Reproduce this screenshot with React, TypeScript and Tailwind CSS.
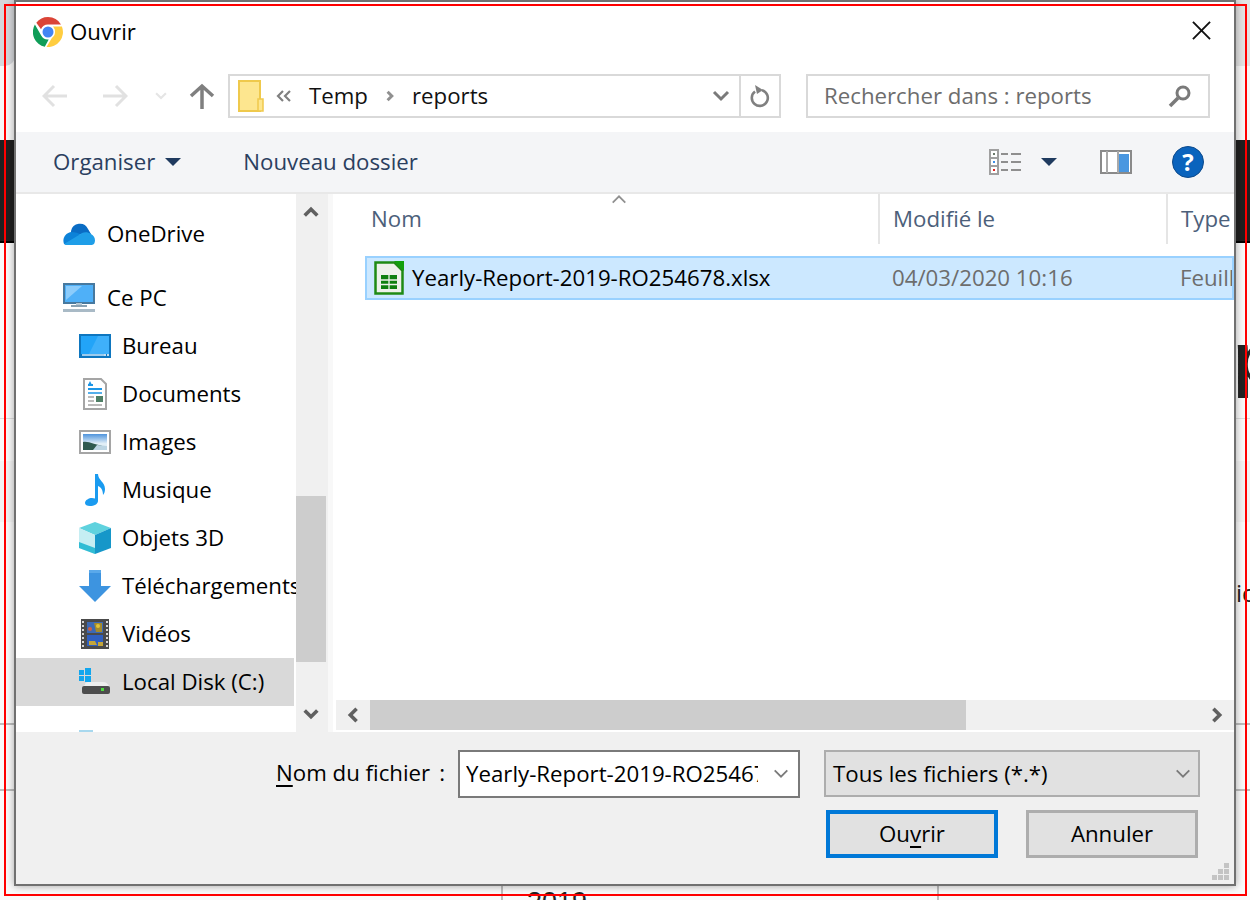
import React from "react";

const ChromeLogo = () => (
  <svg width="30" height="30" viewBox="0 0 30 30">
    <path d="M15 0a15 15 0 0 1 13 7.500H15a7.500 7.500 0 0 0-7 4.800L3.300 5.700A15 15 0 0 1 15 0z" fill="#db4437" />
    <path d="M1.900 7.600l6.300 10.900a7.500 7.500 0 0 0 7.500 4l-3.900 7.300A15 15 0 0 1 1.900 7.600z" fill="#0f9d58" />
    <path d="M28.900 9.500A15 15 0 0 1 13.500 30l6.200-10.500A7.500 7.500 0 0 0 20 9.500z" fill="#ffcd40" />
    <circle cx="15" cy="15" r="7" fill="#fff" />
    <circle cx="15" cy="15" r="5.500" fill="#4285f4" />
  </svg>
);

const Chevron = ({
  dir,
  color,
  size = 20,
  weight = 3,
}: {
  dir: "up" | "down" | "left" | "right";
  color: string;
  size?: number;
  weight?: number;
}) => {
  const points = {
    up: "3,14 10,7 17,14",
    down: "3,6 10,13 17,6",
    left: "14,3 7,10 14,17",
    right: "6,3 13,10 6,17",
  }[dir];
  return (
    <svg width={size} height={size} viewBox="0 0 20 20" className="shrink-0">
      <polyline points={points} fill="none" stroke={color} strokeWidth={weight} />
    </svg>
  );
};

const Triangle = () => (
  <svg width="16" height="8" viewBox="0 0 16 8" className="shrink-0">
    <path d="M0 0h16L8 8z" fill="#1f3a5f" />
  </svg>
);

const Arrow = ({ color, flip }: { color: string; flip?: boolean }) => (
  <svg width="26" height="24" viewBox="0 0 26 24" className={flip ? "rotate-180" : ""}>
    <path d="M25 12H3M12 2L2 12l10 10" fill="none" stroke={color} strokeWidth="3" />
  </svg>
);

const FolderIcon = () => (
  <svg width="26" height="32" viewBox="0 0 26 32" className="shrink-0">
    <rect x="1" y="1" width="21" height="30" fill="#fde68f" stroke="#efc94c" strokeWidth="2" />
    <rect x="20" y="19" width="5" height="12" fill="#fde68f" stroke="#efc94c" strokeWidth="1.500" />
  </svg>
);

const DoubleChevron = () => (
  <svg width="16" height="14" viewBox="0 0 16 14" className="shrink-0">
    <path d="M7 2L2 7l5 5M14 2L9 7l5 5" fill="none" stroke="#808080" strokeWidth="2.200" />
  </svg>
);

const SheetIcon = () => (
  <svg width="30" height="34" viewBox="0 0 30 34">
    <path d="M1.500 1.500h19l8 8v23h-27z" fill="#eef1ea" stroke="#1f8a14" strokeWidth="2.500" />
    <path d="M20 0h10v10z" fill="#11a00c" />
    <rect x="7" y="14" width="16" height="14" fill="#0f7f0f" />
    <path d="M7 19h16M7 23.500h16M15 14v14" stroke="#eef1ea" strokeWidth="1.300" />
  </svg>
);

const OneDriveIcon = () => (
  <svg width="32" height="24" viewBox="0 0 32 24">
    <path d="M8 9a9 9 0 0 1 17-2l3 5H8z" fill="#0a6cc4" />
    <path d="M1 22c-2-5 1-11 7-12 4 0 8 1 10 3l-6 9z" fill="#0c82d8" />
    <path d="M4 23c-1 0-2 0-3-1l15-9c3-3 8-4 12-1 4 2 5 7 3 10l-2 1z" fill="#1f9ee8" />
  </svg>
);

const PcIcon = () => (
  <svg width="32" height="30" viewBox="0 0 32 30">
    <rect x="1" y="1" width="30" height="19" fill="#4fb0f8" stroke="#47799f" strokeWidth="2" />
    <path d="M3 3h16L3 17z" fill="#8cccfb" />
    <rect x="13" y="20" width="6" height="3" fill="#b5c7d3" />
    <rect x="8" y="22" width="16" height="2" fill="#8aa2b3" />
    <rect x="0" y="26" width="32" height="3" fill="#a9bac6" />
  </svg>
);

const DesktopIcon = () => (
  <svg width="32" height="24" viewBox="0 0 32 24">
    <rect width="32" height="24" fill="#0e76bf" />
    <rect x="2" y="2" width="28" height="18" fill="#22a4f8" />
    <path d="M19 2h11v18H10z" fill="#3fb0fa" />
    <path d="M3 21h22" stroke="#cfe9fb" strokeWidth="1.500" />
    <path d="M25 21h2M28 21h2" stroke="#fff" strokeWidth="1.500" />
  </svg>
);

const DocIcon = () => (
  <svg width="24" height="32" viewBox="0 0 24 32">
    <path d="M1 1h17l5 5v25H1z" fill="#fff" stroke="#a5a5a5" strokeWidth="2" />
    <path d="M5 7h5M5 11h14" stroke="#1d96e6" strokeWidth="2" />
    <path d="M7 3l-2 4h4z" fill="#1d96e6" />
    <path d="M5 15h14" stroke="#1d96e6" strokeWidth="1.500" />
    <path d="M5 19h6M5 23h6M5 27h14" stroke="#a5a5a5" strokeWidth="1.500" />
    <rect x="13" y="18" width="7" height="6" fill="#4f7f66" />
  </svg>
);

const ImageIcon = () => (
  <svg width="32" height="24" viewBox="0 0 32 24">
    <defs>
      <linearGradient id="sky" x1="0" y1="0" x2="0" y2="1">
        <stop offset="0" stopColor="#4f94dc" />
        <stop offset="0.6" stopColor="#e2eff7" />
      </linearGradient>
    </defs>
    <rect x="1" y="1" width="30" height="22" fill="#fff" stroke="#a5a5a5" strokeWidth="2" />
    <rect x="4" y="4" width="24" height="16" fill="url(#sky)" />
    <path d="M4 12c6-1 12 3 24 5v3H4z" fill="#2f5a4f" />
    <path d="M18 15l10 1v4H14z" fill="#bcd5e3" />
  </svg>
);

const MusicIcon = () => (
  <svg width="24" height="32" viewBox="0 0 24 32">
    <path d="M12 0h3c0 6 7 8 7 15 0 3-1 5-2 6 0-5-2-8-5-9v15c0 3-4 5-8 5-3 0-5-1-5-3 0-3 4-5 7-5l3 .5z" fill="#1a9bf0" />
  </svg>
);

const CubeIcon = () => (
  <svg width="32" height="32" viewBox="0 0 32 32">
    <path d="M16 0l16 6-16 7L0 6z" fill="#5fd2de" />
    <path d="M0 6l16 7v19L0 26z" fill="#c6eef3" />
    <path d="M32 6l-16 7v19l16-6z" fill="#1697c9" />
    <path d="M0 20l16 6v6L0 26z" fill="#31bcd4" />
  </svg>
);

const DownloadIcon = () => (
  <svg width="32" height="32" viewBox="0 0 32 32">
    <path d="M10 0h12v16h10L16 32 0 16h10z" fill="#3d94e0" />
    <path d="M10 0h12v3H10z" fill="#5aa9ea" />
  </svg>
);

const VideoIcon = () => (
  <svg width="28" height="30" viewBox="0 0 28 30">
    <rect width="28" height="30" fill="#4a4a4a" />
    <path d="M2 2v26M26 2v26" stroke="#d8d8d8" strokeWidth="2" strokeDasharray="2 2" />
    <rect x="6" y="3" width="16" height="11" fill="#3c69b5" />
    <rect x="6" y="16" width="16" height="11" fill="#2f5fc0" />
    <path d="M13 4h8v9h-6z" fill="#a38a2c" />
    <path d="M8 22h6l2 4H8zM17 23h5v4h-5z" fill="#c5a63a" />
    <circle cx="17" cy="7" r="2" fill="#e0c33a" />
    <circle cx="9" cy="10" r="2" fill="#cf5f3f" />
  </svg>
);

const DiskIcon = () => (
  <svg width="32" height="28" viewBox="0 0 32 28">
    <path d="M0 2h5v5H0zM6 0h6v7H6zM0 8h5v5H0zM6 8h6v6H6z" fill="#12a6ee" />
    <path d="M6 17c0-2 1-3 3-3h15c3 0 5 2 6 4v1H3z" fill="#eeeeee" />
    <rect x="3" y="18" width="28" height="8" rx="2" fill="#4d4d4d" />
    <rect x="22" y="20" width="3" height="3" fill="#4fdc3f" />
  </svg>
);

const ViewIcon = () => (
  <svg width="32" height="26" viewBox="0 0 32 26">
    <rect x="1" y="1" width="8" height="24" fill="#fff" stroke="#a0a0a0" strokeWidth="2" />
    <path d="M1 9h8M1 17h8" stroke="#a0a0a0" strokeWidth="2" />
    <rect x="4" y="4" width="2" height="2" fill="#6a7a6a" />
    <rect x="4" y="12" width="2" height="2" fill="#3f8fe8" />
    <rect x="4" y="20" width="2" height="2" fill="#d22" />
    <path d="M12 5h7M22 5h10M12 13h7M22 13h10M12 21h7M22 21h10" stroke="#8f8f8f" strokeWidth="2" />
  </svg>
);

const PaneIcon = () => (
  <svg width="32" height="24" viewBox="0 0 32 24">
    <rect x="1" y="1" width="30" height="22" fill="#fff" stroke="#8a8a8a" strokeWidth="2" />
    <path d="M7 1v22M18 1v22" stroke="#a9a9a9" strokeWidth="2" />
    <rect x="19" y="4" width="10" height="18" fill="#4a97e0" />
  </svg>
);

const HelpIcon = () => (
  <div className="w-8 h-8 rounded-full bg-[#0a63bd] border border-[#0d4a8c] flex items-center justify-center text-white font-bold text-[24px] leading-none">
    ?
  </div>
);

const SearchIcon = () => (
  <svg width="24" height="24" viewBox="0 0 24 24">
    <circle cx="15" cy="9" r="6" fill="none" stroke="#7a7a7a" strokeWidth="3" />
    <path d="M10 14l-8 8" stroke="#7a7a7a" strokeWidth="3.500" />
  </svg>
);

const RefreshIcon = () => (
  <svg width="20" height="24" viewBox="0 0 20 24">
    <path d="M12 6.200A8 8 0 1 1 5 7.500" fill="none" stroke="#808080" strokeWidth="2.600" />
    <path d="M5 1l8 5-6 4z" fill="#808080" />
  </svg>
);

const navItems = [
  { label: "Bureau", icon: <DesktopIcon /> },
  { label: "Documents", icon: <DocIcon /> },
  { label: "Images", icon: <ImageIcon /> },
  { label: "Musique", icon: <MusicIcon /> },
  { label: "Objets 3D", icon: <CubeIcon /> },
  { label: "Téléchargements", icon: <DownloadIcon /> },
  { label: "Vidéos", icon: <VideoIcon /> },
  { label: "Local Disk (C:)", icon: <DiskIcon />, active: true },
];

function Backdrop() {
  return (
    <div className="h-[900px] flex flex-col bg-[#fafafa] text-[#222]">
      <div className="h-[140px] shrink-0 bg-[#f7f7f7]">
        <div className="h-[66px] flex justify-between">
          <div className="w-[15px] rounded-br-[10px] bg-[#d5d7db]" />
          <div className="w-[15px] bg-[#e3e3e3]" />
        </div>
      </div>
      <div className="h-[103px] shrink-0 bg-[#1f1f1f] border-b-2 border-black" />
      <div className="h-[176px] shrink-0 border-b border-[#dddddd] pl-[1233px] pt-[79px] text-[72px] leading-[72px] font-semibold overflow-hidden font-['Liberation_Sans',sans-serif]">
        p
      </div>
      <div className="h-[306px] shrink-0 border-b-2 border-[#bdbdbd] overflow-hidden">
        <div className="h-[42px]" />
        <div className="h-[61px] bg-[#f3f3f3]" />
        <div className="pl-[1236px] pt-[56px] text-[24px] leading-[30px]">ic</div>
      </div>
      <div className="h-[66px] shrink-0 border-b-2 border-[#bdbdbd]" />
      <div className="flex-1 flex pl-[501px]">
        <div className="w-[438px] border-x-2 border-[#bdbdbd] pl-[24px] pt-[98px] text-[27px] leading-[27px] font-['Liberation_Sans',sans-serif] overflow-hidden">
          2019
        </div>
      </div>
    </div>
  );
}

export default function App() {
  return (
    <div className="relative w-[1250px] h-[900px] overflow-hidden font-['Open_Sans',sans-serif] text-[22.25px] leading-[28px] text-black">
      <Backdrop />

      <div className="absolute left-[14px] top-0 w-[1222px] h-[886px] border-2 border-[#707070] bg-white flex flex-col shadow-[0_0_8px_rgba(0,0,0,0.35)]">
        {/* title bar */}
        <div className="h-[60px] shrink-0 flex items-center pl-[17px] pr-[23px]">
          <ChromeLogo />
          <span className="ml-[7px]">Ouvrir</span>
          <svg width="19" height="19" viewBox="0 0 20 20" className="ml-auto mb-[3px]">
            <path d="M1 1l18 18M19 1L1 19" stroke="#111" strokeWidth="2" />
          </svg>
        </div>

        {/* address row */}
        <div className="h-[70px] shrink-0 flex items-start pt-[12px] pl-[26px] bg-white">
          <div className="h-11 flex items-center">
            <Arrow color="#e1e1e1" />
            <div className="ml-[34px]"><Arrow color="#e1e1e1" flip /></div>
            <div className="ml-[26px]"><Chevron dir="down" color="#e5e5e5" size={14} /></div>
            <div className="ml-[21px]">
              <svg width="26" height="26" viewBox="0 0 26 26" className="block">
                <path d="M13 26V3M2 13L13 3l11 10" fill="none" stroke="#7f7f7f" strokeWidth="3.500" />
              </svg>
            </div>
          </div>
          <div className="ml-[13px] w-[553px] h-11 border-2 border-[#d9d9d9] flex items-center pl-[8px]">
            <FolderIcon />
            <div className="ml-[12px]"><DoubleChevron /></div>
            <span className="ml-[17px] text-[#111]">Temp</span>
            <div className="ml-[16px]"><Chevron dir="right" color="#909090" size={12} weight={5} /></div>
            <span className="ml-[16px] text-[#111]">reports</span>
            <div className="ml-auto"><Chevron dir="down" color="#7a7a7a" /></div>
            <div className="ml-[8px] w-[40px] h-full border-l-2 border-[#d9d9d9] flex items-center justify-center">
              <RefreshIcon />
            </div>
          </div>
          <div className="ml-[25px] w-[404px] h-11 border-2 border-[#d9d9d9] flex items-center pl-[16px] pr-[16px] text-[#6d6d6d]">
            <span>Rechercher dans : reports</span>
            <div className="ml-auto"><SearchIcon /></div>
          </div>
        </div>

        {/* toolbar */}
        <div className="h-[62px] shrink-0 flex items-center bg-[#f4f5f7] border-b-2 border-[#e8e8e8] pl-[37px] text-[#2b3f5f]">
          <span>Organiser</span>
          <div className="ml-[10px]"><Triangle /></div>
          <span className="ml-[62px]">Nouveau dossier</span>
          <div className="ml-auto flex items-center pr-[30px]">
            <ViewIcon />
            <div className="ml-[20px]"><Triangle /></div>
            <div className="ml-[43px]"><PaneIcon /></div>
            <div className="ml-[40px]"><HelpIcon /></div>
          </div>
        </div>

        {/* main */}
        <div className="flex-1 min-h-0 flex">
          {/* nav pane */}
          <div className="w-[280px] shrink-0 overflow-hidden pt-[16px] whitespace-nowrap">
            <div className="h-[48px] flex items-center pl-[47px]">
              <OneDriveIcon />
              <span className="ml-[12px]">OneDrive</span>
            </div>
            <div className="h-[48px] mt-[16px] flex items-center pl-[47px]">
              <PcIcon />
              <span className="ml-[12px]">Ce PC</span>
            </div>
            {navItems.map((item) => (
              <div
                key={item.label}
                className={`h-[48px] flex items-center pl-[63px] mr-[2px] ${item.active ? "bg-[#d9d9d9]" : ""}`}
              >
                <div className="w-[32px] flex justify-center shrink-0">{item.icon}</div>
                <span className="ml-[11px]">{item.label}</span>
              </div>
            ))}
            <div className="ml-[63px] mt-[24px] w-[14px] h-[2px] bg-[#a8d8ee]" />
          </div>
          {/* nav scrollbar */}
          <div className="w-[32px] shrink-0 bg-[#f0f0f0]">
            <div className="w-[30px] h-full flex flex-col">
              <div className="h-[36px] flex items-center justify-center"><Chevron dir="up" color="#606060" size={18} weight={4} /></div>
              <div className="h-[266px]" />
              <div className="h-[166px] bg-[#cdcdcd]" />
              <div className="flex-1 flex items-end justify-center pb-[9px]"><Chevron dir="down" color="#606060" size={18} weight={4} /></div>
            </div>
          </div>
          <div className="w-[5px] shrink-0 bg-[#f8f8f8]" />
          <div className="w-[3px] shrink-0" />

          {/* file list */}
          <div className="flex-1 min-w-0 flex flex-col overflow-hidden">
            <div className="h-[50px] shrink-0 flex text-[#4c607a] relative">
              <div className="w-[544px] border-r-2 border-[#e5e5e5] pl-[35px] flex items-center">Nom</div>
              <div className="w-[288px] border-r-2 border-[#e5e5e5] pl-[13px] flex items-center">Modifié le</div>
              <div className="pl-[13px] flex items-center">Type</div>
              <div className="absolute left-[274px] top-[-4px]">
                <Chevron dir="up" color="#909090" size={18} weight={2} />
              </div>
            </div>
            <div className="ml-[29px] mt-[12px] h-[44px] shrink-0 bg-[#cce8ff] border-2 border-[#99d1ff] flex items-center whitespace-nowrap overflow-hidden">
              <div className="ml-[7px] shrink-0"><SheetIcon /></div>
              <span className="ml-[8px] w-[480px] shrink-0">Yearly-Report-2019-RO254678.xlsx</span>
              <span className="w-[288px] shrink-0 text-[#6d6d6d]">04/03/2020 10:16</span>
              <span className="text-[#6d6d6d]">Feuill</span>
            </div>
            <div className="flex-1" />
            <div className="h-[30px] mb-[2px] shrink-0 flex bg-[#f0f0f0] items-stretch">
              <div className="w-[34px] flex items-center justify-center"><Chevron dir="left" color="#606060" size={18} weight={4} /></div>
              <div className="w-[596px] bg-[#cdcdcd]" />
              <div className="flex-1" />
              <div className="w-[34px] flex items-center justify-center"><Chevron dir="right" color="#606060" size={18} weight={4} /></div>
            </div>
          </div>
        </div>

        {/* footer */}
        <div className="h-[152px] shrink-0 bg-[#f0f0f0] flex flex-col relative">
          <div className="flex items-start pt-[18px] pl-[260px]">
            <div className="w-[182px] h-[46px] flex items-center whitespace-nowrap">
              <span><u className="underline-offset-4">N</u>om du fichier<span className="ml-[9px]">:</span></span>
            </div>
            <div className="w-[342px] h-[48px] border-2 border-[#7a7a7a] bg-white flex items-center pl-[6px] pr-[8px]">
              <span className="w-[292px] overflow-hidden whitespace-nowrap">Yearly-Report-2019-RO254678.xlsx</span>
              <div className="ml-auto"><Chevron dir="down" color="#7a7a7a" size={18} weight={2} /></div>
            </div>
            <div className="ml-[24px] w-[376px] h-[47px] border-2 border-[#adadad] bg-[#e1e1e1] flex items-center pl-[7px] pr-[6px]">
              <span>Tous les fichiers (*.*)</span>
              <div className="ml-auto"><Chevron dir="down" color="#7a7a7a" size={18} weight={2} /></div>
            </div>
          </div>
          <div className="flex pt-[12px] pl-[810px]">
            <div className="w-[172px] h-[48px] border-[4px] border-[#0078d7] bg-[#e1e1e1] flex items-center justify-center">
              <span>Ou<u className="underline-offset-4">v</u>rir</span>
            </div>
            <div className="ml-[28px] w-[172px] h-[48px] border-[3px] border-[#adadad] bg-[#e1e1e1] flex items-center justify-center">
              Annuler
            </div>
          </div>
          <svg width="18" height="18" viewBox="0 0 18 18" className="absolute right-[4px] bottom-[3px]">
            <path d="M12 0h5v5h-5zM6 6h5v5H6zM12 6h5v5h-5zM0 12h5v5H0zM6 12h5v5H6zM12 12h5v5h-5z" fill="#c4c4c4" />
          </svg>
        </div>
      </div>

      {/* red annotation frame */}
      <div className="absolute left-[4px] top-[4px] w-[1243px] h-[892px] border-2 border-[#ff0000] pointer-events-none" />
    </div>
  );
}
